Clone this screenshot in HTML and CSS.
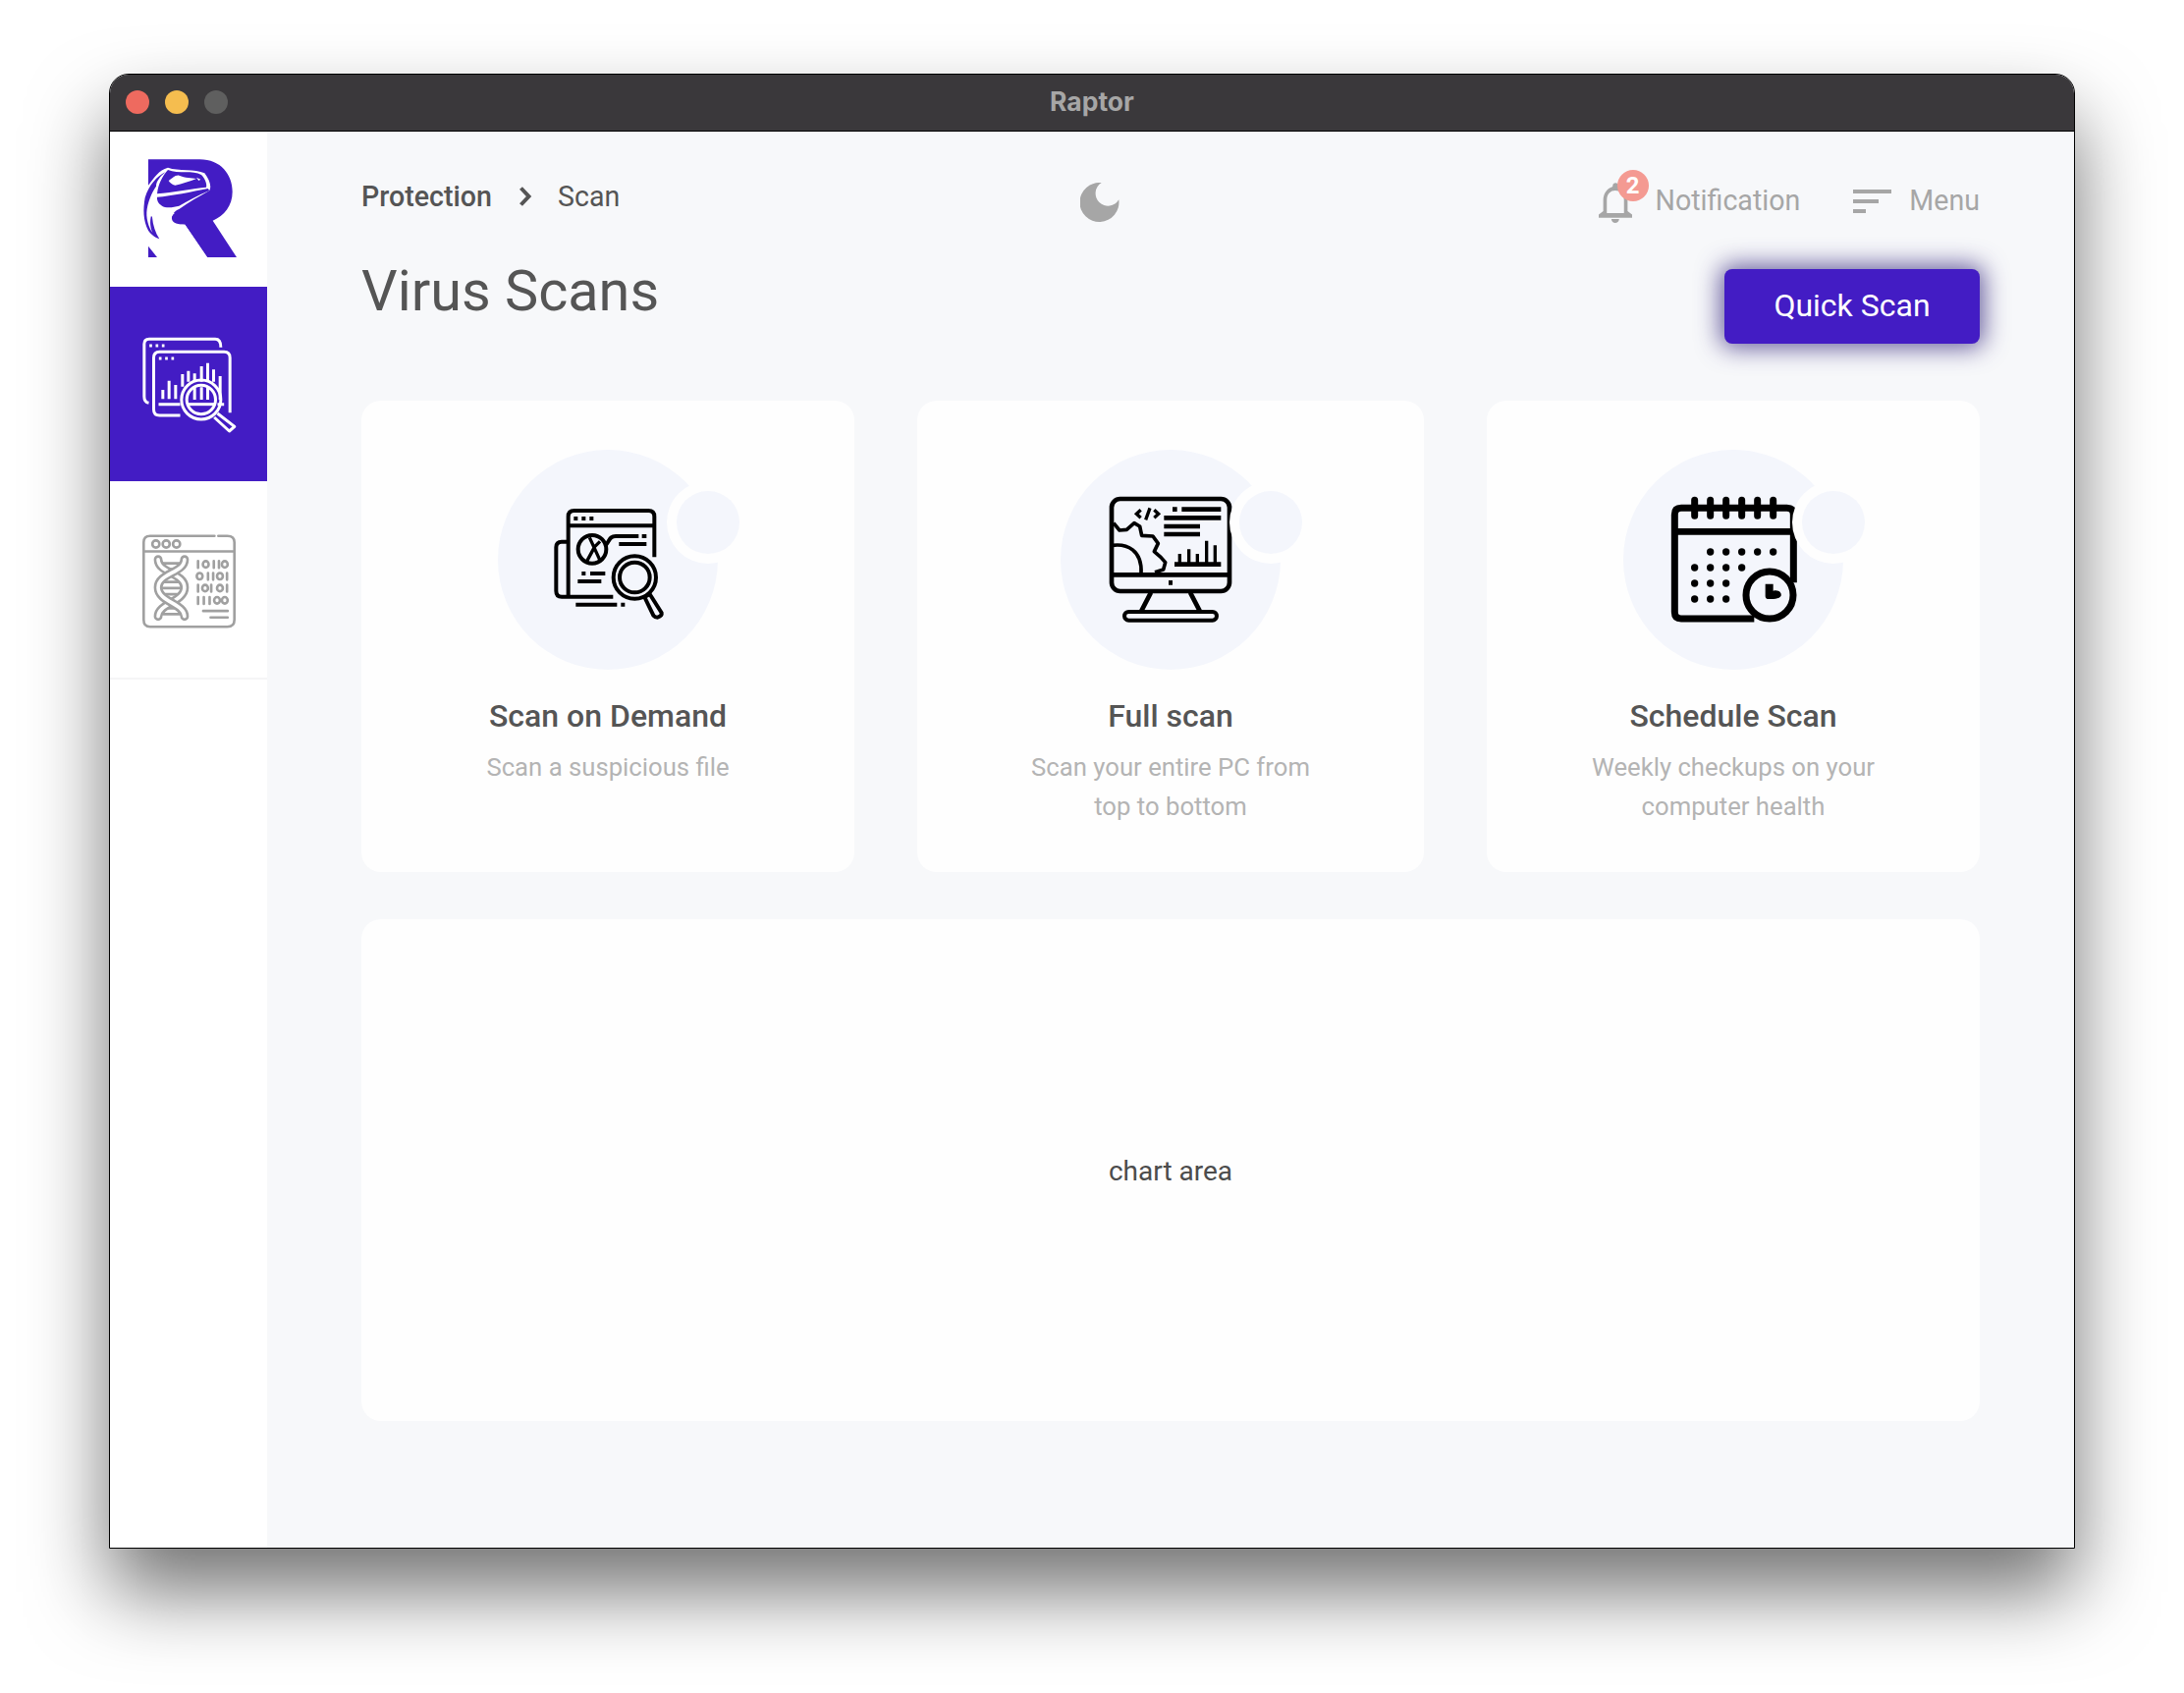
FILE: index.html
```html
<!DOCTYPE html>
<html lang="en">
<head>
<meta charset="utf-8">
<title>Raptor</title>
<link rel="stylesheet" href="styles.css">
</head>
<body>
<div class="window">
  <header class="titlebar">
    <div class="lights"><span class="light red"></span><span class="light yellow"></span><span class="light grey"></span></div>
    <div class="app-name">Raptor</div>
  </header>
  <div class="app">
    <aside class="sidebar">
      <div class="logo">
        <svg class="logo-svg" viewBox="0 0 300 324">
          <path fill="#431cc4" d="M18 13H175C240 13 275 60 275 112C275 155 250 185 215 200L288 312H198L130 212H105C88 210 82 190 98 178L18 92Z"/>
          <path fill="#fff" d="M18 92C35 70 50 45 78 38C110 50 160 40 190 55C205 75 212 95 205 108C175 125 140 145 112 165C95 172 88 185 90 195C92 208 110 212 130 212L198 312H45L18 278V258L0 230V100Z"/>
          <path fill="#431cc4" d="M18 278L45 312H18Z"/>
          <path fill="#431cc4" d="M70 52C45 65 20 90 8 130C2 165 2 200 18 230C28 245 42 252 52 256C40 238 32 215 30 190L27 185C22 200 24 225 32 238C18 220 10 190 14 165C20 130 35 105 42 95C42 80 55 65 70 52Z"/>
          <path fill="#431cc4" d="M78 45C110 58 155 45 180 60C192 72 198 90 195 98C160 100 90 115 45 118C48 90 60 65 78 45Z"/>
          <path fill="#fff" d="M80 78C90 72 100 60 112 62C130 70 150 68 165 72C145 80 120 88 100 92C90 90 84 84 80 78ZM165 68L178 74L172 78Z"/>
          <path fill="#431cc4" d="M45 128C90 125 150 112 200 102L205 108C170 122 140 140 112 155C95 160 70 162 60 155C50 148 44 140 45 128Z"/>
        </svg>
      </div>
      <a class="nav-item active">
        <svg class="nav-svg" viewBox="100 155 290 300" fill="none" stroke="#fff" stroke-width="9">
          <path d="M122 360C110 358 108 350 108 340V180Q108 165 123 165H325Q342 165 342 190"/>
          <path d="M218 398H155Q137 398 137 380V222Q137 204 155 204H352Q370 204 370 222V390"/>
          <path stroke-dasharray="8 11" d="M124 185H175M153 224H203"/>
          <path d="M152 364H218M332 364H352M165 348V320M184 348V292M204 348V305M225 310V272M243 295V262M262 295V270M283 295V248M302 295V238M320 295V258M340 350V278M262 312V350M283 312V350M302 312V350"/>
          <circle cx="282" cy="350" r="60"/>
          <circle cx="282" cy="350" r="44"/>
          <path d="M240 364H325"/>
          <path stroke-linejoin="round" d="M332 392L384 432L368 446L322 404"/>
        </svg>
      </a>
      <a class="nav-item">
        <svg class="nav-svg" viewBox="98 757 296 298" fill="none" stroke="#a0a0a0" stroke-width="8" stroke-linecap="round">
          <path d="M325 765H125Q105 765 105 785V1025Q105 1047 125 1047H365Q387 1047 387 1025V785Q387 765 365 765H337M105 813H387"/>
          <circle cx="143" cy="790" r="11"/><circle cx="175" cy="790" r="11"/><circle cx="207" cy="790" r="11"/>
          <path d="M165 850H222M165 868H222M155 908H228M155 927H228M155 946H228M165 990H222M165 1008H222"/>
          <path stroke-width="27" d="M150 838C150 880 232 880 232 925C232 970 150 975 150 1015"/>
          <path stroke-width="11" stroke="#fff" d="M150 838C150 880 232 880 232 925C232 970 150 975 150 1015"/>
          <path stroke-width="27" d="M232 838C232 880 150 880 150 925C150 970 232 975 232 1015"/>
          <path stroke-width="11" stroke="#fff" d="M232 838C232 880 150 880 150 925C150 970 232 975 232 1015"/>
          <path d="M274 843V864M323 843V864M339 843V864M305 880V901M321 880V901M364 880V901M274 917V938M315 917V938M364 917V938M274 955V976M292 955V976M310 955V976"/>
          <ellipse cx="298" cy="853" rx="9" ry="10"/><ellipse cx="357" cy="853" rx="9" ry="10"/>
          <ellipse cx="279" cy="890" rx="9" ry="10"/><ellipse cx="342" cy="890" rx="9" ry="10"/>
          <ellipse cx="296" cy="927" rx="9" ry="10"/><ellipse cx="342" cy="927" rx="9" ry="10"/>
          <ellipse cx="333" cy="965" rx="9" ry="10"/><ellipse cx="357" cy="965" rx="9" ry="10"/>
          <path d="M290 998H366M313 1018H366"/>
        </svg>
      </a>
    </aside>
    <main class="main">
      <div class="topbar">
        <nav class="crumbs"><span class="crumb-root">Protection</span>
          <svg class="crumb-sep" viewBox="0 0 14 20"><path d="M2.5 1.5L10.5 10L2.5 18.5" fill="none" stroke="#555" stroke-width="4"/></svg>
          <span class="crumb-leaf">Scan</span></nav>
        <svg class="moon" viewBox="0 0 40 40"><path fill="#a6a6a6" d="M21.7 .1A20 20 0 1 0 39.3 17.3A12.7 12.7 0 1 1 21.7 .1Z"/></svg>
        <div class="tools">
          <div class="notif">
            <svg class="bell" viewBox="147 135 103 127"><path fill="#a6a6a6" d="M190 148C190 136 208 136 208 148V150C226 158 236 172 236 192V226L250 236V246H147V236L161 226V192C161 172 172 156 190 150ZM172 232H225V192C225 172 212 162 198 162C184 162 172 172 172 192ZM186 250H210C209 266 187 266 186 250Z"/></svg>
            <span class="badge">2</span>
            <span class="tool-label">Notification</span>
          </div>
          <div class="menu">
            <span class="menu-bars"><i class="bar bar-l"></i><i class="bar bar-m"></i><i class="bar bar-s"></i></span>
            <span class="tool-label">Menu</span>
          </div>
        </div>
      </div>
      <div class="title-row">
        <h1 class="page-title">Virus Scans</h1>
        <button class="quick-scan">Quick Scan</button>
      </div>
      <section class="cards">
        <article class="card">
          <div class="blob">
            <svg class="blob-icon" viewBox="50 54 672 672" fill="none" stroke="#000" stroke-width="12">
              <path d="M265 500V258Q265 240 283 240H510Q528 240 528 258V382M265 286H528"/>
              <path stroke-dasharray="12 12" d="M282 264H345"/>
              <path d="M262 335H245Q228 335 228 352V485Q228 503 245 503H262C268 503 268 503 402 503"/>
              <circle cx="338" cy="358" r="43"/>
              <path stroke-width="10" d="M330 322L362 392M346 350L322 394M346 350L362 334"/>
              <path d="M380 345C392 330 392 318 410 318H480M490 318H504M420 342H504M306 432H318M332 432H378M294 456H366M288 527H414M426 527H438"/>
              <circle cx="468" cy="444" r="65"/><circle cx="468" cy="444" r="46"/>
              <path stroke-linejoin="round" d="M498 504L514 495L550 552Q552 562 538 566Q530 566 525 560Z"/>
            </svg>
            <span class="blob-dot"></span>
          </div>
          <h2 class="card-title">Scan on Demand</h2>
          <p class="card-desc">Scan a suspicious file</p>
        </article>
        <article class="card">
          <div class="blob">
            <svg class="blob-icon" viewBox="60 54 672 672" fill="none" stroke="#000" stroke-width="14">
              <rect x="216" y="204" width="360" height="282" rx="26"/>
              <path d="M216 436H576M336 490L306 548M456 490L486 548"/>
              <rect x="255" y="549" width="282" height="26" rx="13" stroke-width="12"/>
              <path d="M390 460H402M402 236H416M430 236H550M376 262H550M376 288H486M376 312H486M408 404H550"/>
              <path stroke-width="10" d="M424 404V372M452 404V358M478 404V372M506 404V332M532 404V346"/>
              <path stroke-width="10" d="M305 238L292 250L305 262M346 238L359 250L346 262M333 232L320 268"/>
              <path stroke-width="11" stroke-linejoin="round" d="M222 278L240 300L262 298L285 278L302 288L308 316L342 318L358 340L346 365L366 382L380 398L374 420L348 428"/>
              <path stroke-width="11" d="M218 346C262 340 310 360 306 432"/>
            </svg>
            <span class="blob-dot"></span>
          </div>
          <h2 class="card-title">Full scan</h2>
          <p class="card-desc">Scan your entire PC from<br>top to bottom</p>
        </article>
        <article class="card">
          <div class="blob">
            <svg class="blob-icon" viewBox="70 54 672 672" fill="none" stroke="#000" stroke-width="21">
              <path d="M590 460V252Q590 232 570 232H247Q227 232 227 252V550Q227 570 247 570H470"/>
              <path stroke-width="20" d="M227 304H590"/>
              <path stroke-linecap="round" d="M288 208V256M336 208V256M384 208V256M432 208V256M480 208V256M528 208V256"/>
              <circle cx="517" cy="498" r="72"/>
              <path fill="#000" stroke="none" d="M504 464H528V485C545 480 555 492 552 500C548 510 525 510 510 510Q504 510 504 502Z"/>
              <g fill="#000" stroke="none">
                <circle cx="336" cy="366" r="11"/><circle cx="384" cy="366" r="11"/><circle cx="432" cy="366" r="11"/><circle cx="480" cy="366" r="11"/><circle cx="528" cy="366" r="11"/>
                <circle cx="288" cy="414" r="11"/><circle cx="336" cy="414" r="11"/><circle cx="384" cy="414" r="11"/><circle cx="432" cy="414" r="11"/>
                <circle cx="288" cy="462" r="11"/><circle cx="336" cy="462" r="11"/><circle cx="384" cy="462" r="11"/>
                <circle cx="288" cy="510" r="11"/><circle cx="336" cy="510" r="11"/><circle cx="384" cy="510" r="11"/>
              </g>
            </svg>
            <span class="blob-dot"></span>
          </div>
          <h2 class="card-title">Schedule Scan</h2>
          <p class="card-desc">Weekly checkups on your<br>computer health</p>
        </article>
      </section>
      <section class="chart">chart area</section>
    </main>
  </div>
</div>
</body>
</html>
```
FILE: styles.css
```css
* { box-sizing: border-box; }
html, body { margin: 0; height: 100%; }
body {
  background: #fff;
  font-family: Roboto, "Liberation Sans", sans-serif;
  padding: 75px 111px 0 111px;
  overflow: hidden;
}
.window {
  width: 2002px;
  height: 1502px;
  display: flex;
  flex-direction: column;
  border: 1px solid #000;
  border-radius: 20px 20px 0 0;
  box-shadow: 0 44px 80px rgba(0,0,0,.55);
  background: #f7f8fa;
}
.titlebar {
  height: 58px;
  flex: none;
  background: #3a383b;
  border-radius: 19px 19px 0 0;
  border-bottom: 1px solid #000;
  display: flex;
  align-items: center;
  justify-content: center;
  position: relative;
}
.lights { position: absolute; left: 16px; top: 16px; display: flex; gap: 16px; }
.light { width: 24px; height: 24px; border-radius: 50%; }
.red { background: #ee6a5f; }
.yellow { background: #f5bd4f; }
.grey { background: #5f5f5f; }
.app-name { color: #a6a6a6; font-family: Inter, Roboto, sans-serif; font-size: 26.5px; font-weight: 700; margin-top: -3px; }
.app { flex: 1; display: flex; min-height: 0; }
.sidebar { width: 160px; flex: none; background: #fff; display: flex; flex-direction: column; }
.logo { height: 158px; padding: 24px 0 0 33px; }
.logo-svg { width: 100px; height: 108px; display: block; }
.nav-item { display: flex; align-items: center; justify-content: center; }
.nav-item.active { background: #431cc4; height: 198px; padding-top: 2px; }
.nav-item:not(.active) { height: 202px; padding-top: 3px; border-bottom: 2px solid #f5f5f6; }
.nav-svg { width: 97px; height: 100px; display: block; }
.main { flex: 1; min-width: 0; padding: 0 96px; }
.topbar { display: flex; align-items: center; justify-content: space-between; height: 132px; position: relative; }
.crumbs { display: flex; align-items: center; color: #555; font-size: 28.6px; }
.crumb-root { font-weight: 500; }
.crumb-sep { width: 14px; height: 20px; margin: 0 26px 0 27px; }
.moon { position: absolute; left: 732px; top: 52px; width: 40px; height: 40px; }
.tools { display: flex; align-items: center; gap: 54px; margin-top: 8px; color: #a6a6a6; font-size: 28.6px; }
.notif { display: flex; align-items: center; position: relative; }
.bell { width: 34px; height: 42px; margin-right: 24px; margin-top: 4px; }
.badge {
  position: absolute; left: 19px; top: -8px;
  width: 32px; height: 32px; border-radius: 50%;
  background: #f49a92; color: #fff; font-size: 24px; font-weight: 700;
  display: flex; align-items: center; justify-content: center;
}
.menu { display: flex; align-items: center; gap: 18px; }
.menu-bars { display: flex; flex-direction: column; gap: 6px; margin-top: 2px; }
.bar { display: block; height: 4px; background: #a6a6a6; }
.bar-l { width: 39px; }
.bar-m { width: 26px; }
.bar-s { width: 13px; }
.title-row { display: flex; justify-content: space-between; align-items: flex-start; height: 142px; padding-top: 8px; }
.page-title { margin: 0; color: #555; font-size: 57.6px; font-weight: 400; line-height: 46px; }
.quick-scan {
  width: 260px; height: 76px; border: 0; border-radius: 8px; padding: 0 0 2px;
  background: #431cc4; color: #fff; font: 400 32px Roboto, sans-serif;
  box-shadow: 0 0 24px 4px rgba(45,30,120,.72);
}
.cards { display: grid; grid-template-columns: 502px 516px 502px; column-gap: 64px; }
.card {
  height: 480px; background: #fefefe; border-radius: 20px;
  padding-top: 50px; display: flex; flex-direction: column; align-items: center; text-align: center;
}
.blob { width: 224px; height: 224px; border-radius: 50%; background: #f4f6fc; position: relative; flex: none; }
.blob-icon { width: 224px; height: 224px; display: block; }
.blob-dot {
  position: absolute; left: 182px; top: 42px; width: 64px; height: 64px; border-radius: 50%;
  background: #f4f6fc; box-shadow: 0 0 0 10px #fefefe;
}
.card-title { margin: 0; color: #555; font-size: 32px; font-weight: 500; line-height: 40px; margin-top: 27px; }
.card-desc { margin: 12px 0 0; color: #b4b4b4; font-size: 25.7px; line-height: 40px; }
.chart {
  margin-top: 48px; height: 511px; padding-top: 2px; background: #fefefe; border-radius: 20px;
  display: flex; align-items: center; justify-content: center; color: #4c4c4c; font-size: 28px;
}
```
